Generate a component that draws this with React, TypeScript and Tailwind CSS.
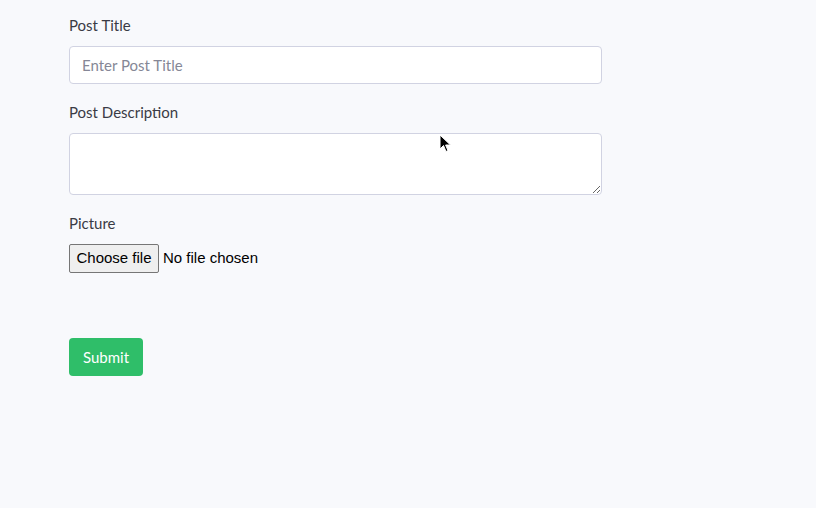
import React from "react";

export default function App() {
  return (
    <div className="relative min-h-[508px] w-full bg-[#f8f9fc] text-[#3a3b45]" style={{ fontFamily: "Lato, 'Open Sans', sans-serif" }}>
      <div className="w-[533px] ml-[69px] pt-[15px]">
        <label className="block text-[15px] leading-[20px] mb-[11px]">Post Title</label>
        <input
          type="text"
          placeholder="Enter Post Title"
          className="block w-full h-[38px] rounded-[4px] border border-[#d1d3e2] bg-white px-[12px] text-[15px] placeholder:text-[#858796] outline-none"
        />
        <label className="block text-[15px] leading-[20px] mt-[18px] mb-[11px]">Post Description</label>
        <textarea className="block w-full h-[62px] rounded-[4px] border border-[#d1d3e2] bg-white px-[12px] py-[6px] text-[15px] outline-none" />
        <label className="block text-[15px] leading-[20px] mt-[18px] mb-[11px]">Picture</label>
        <div className="flex items-center" style={{ fontFamily: "'Liberation Sans', Arial, sans-serif" }}>
          <button className="h-[29px] w-[90px] rounded-[2px] border border-[#767676] bg-[#efefef] text-[15px] text-black">Choose file</button>
          <span className="ml-[4px] text-[15px] text-black">No file chosen</span>
        </div>
        <button className="mt-[65px] h-[38px] w-[74px] rounded-[4px] bg-[#2fbe69] text-[15px] text-white">Submit</button>
      </div>
      <svg className="absolute left-[439px] top-[134px]" width="13" height="20" viewBox="0 0 13 20">
        <path d="M1 1 L1 15 L4.5 11.5 L7 17.5 L9 16.6 L6.6 11 L11.5 11 Z" fill="#000" stroke="#fff" strokeWidth="1" />
      </svg>
    </div>
  );
}
